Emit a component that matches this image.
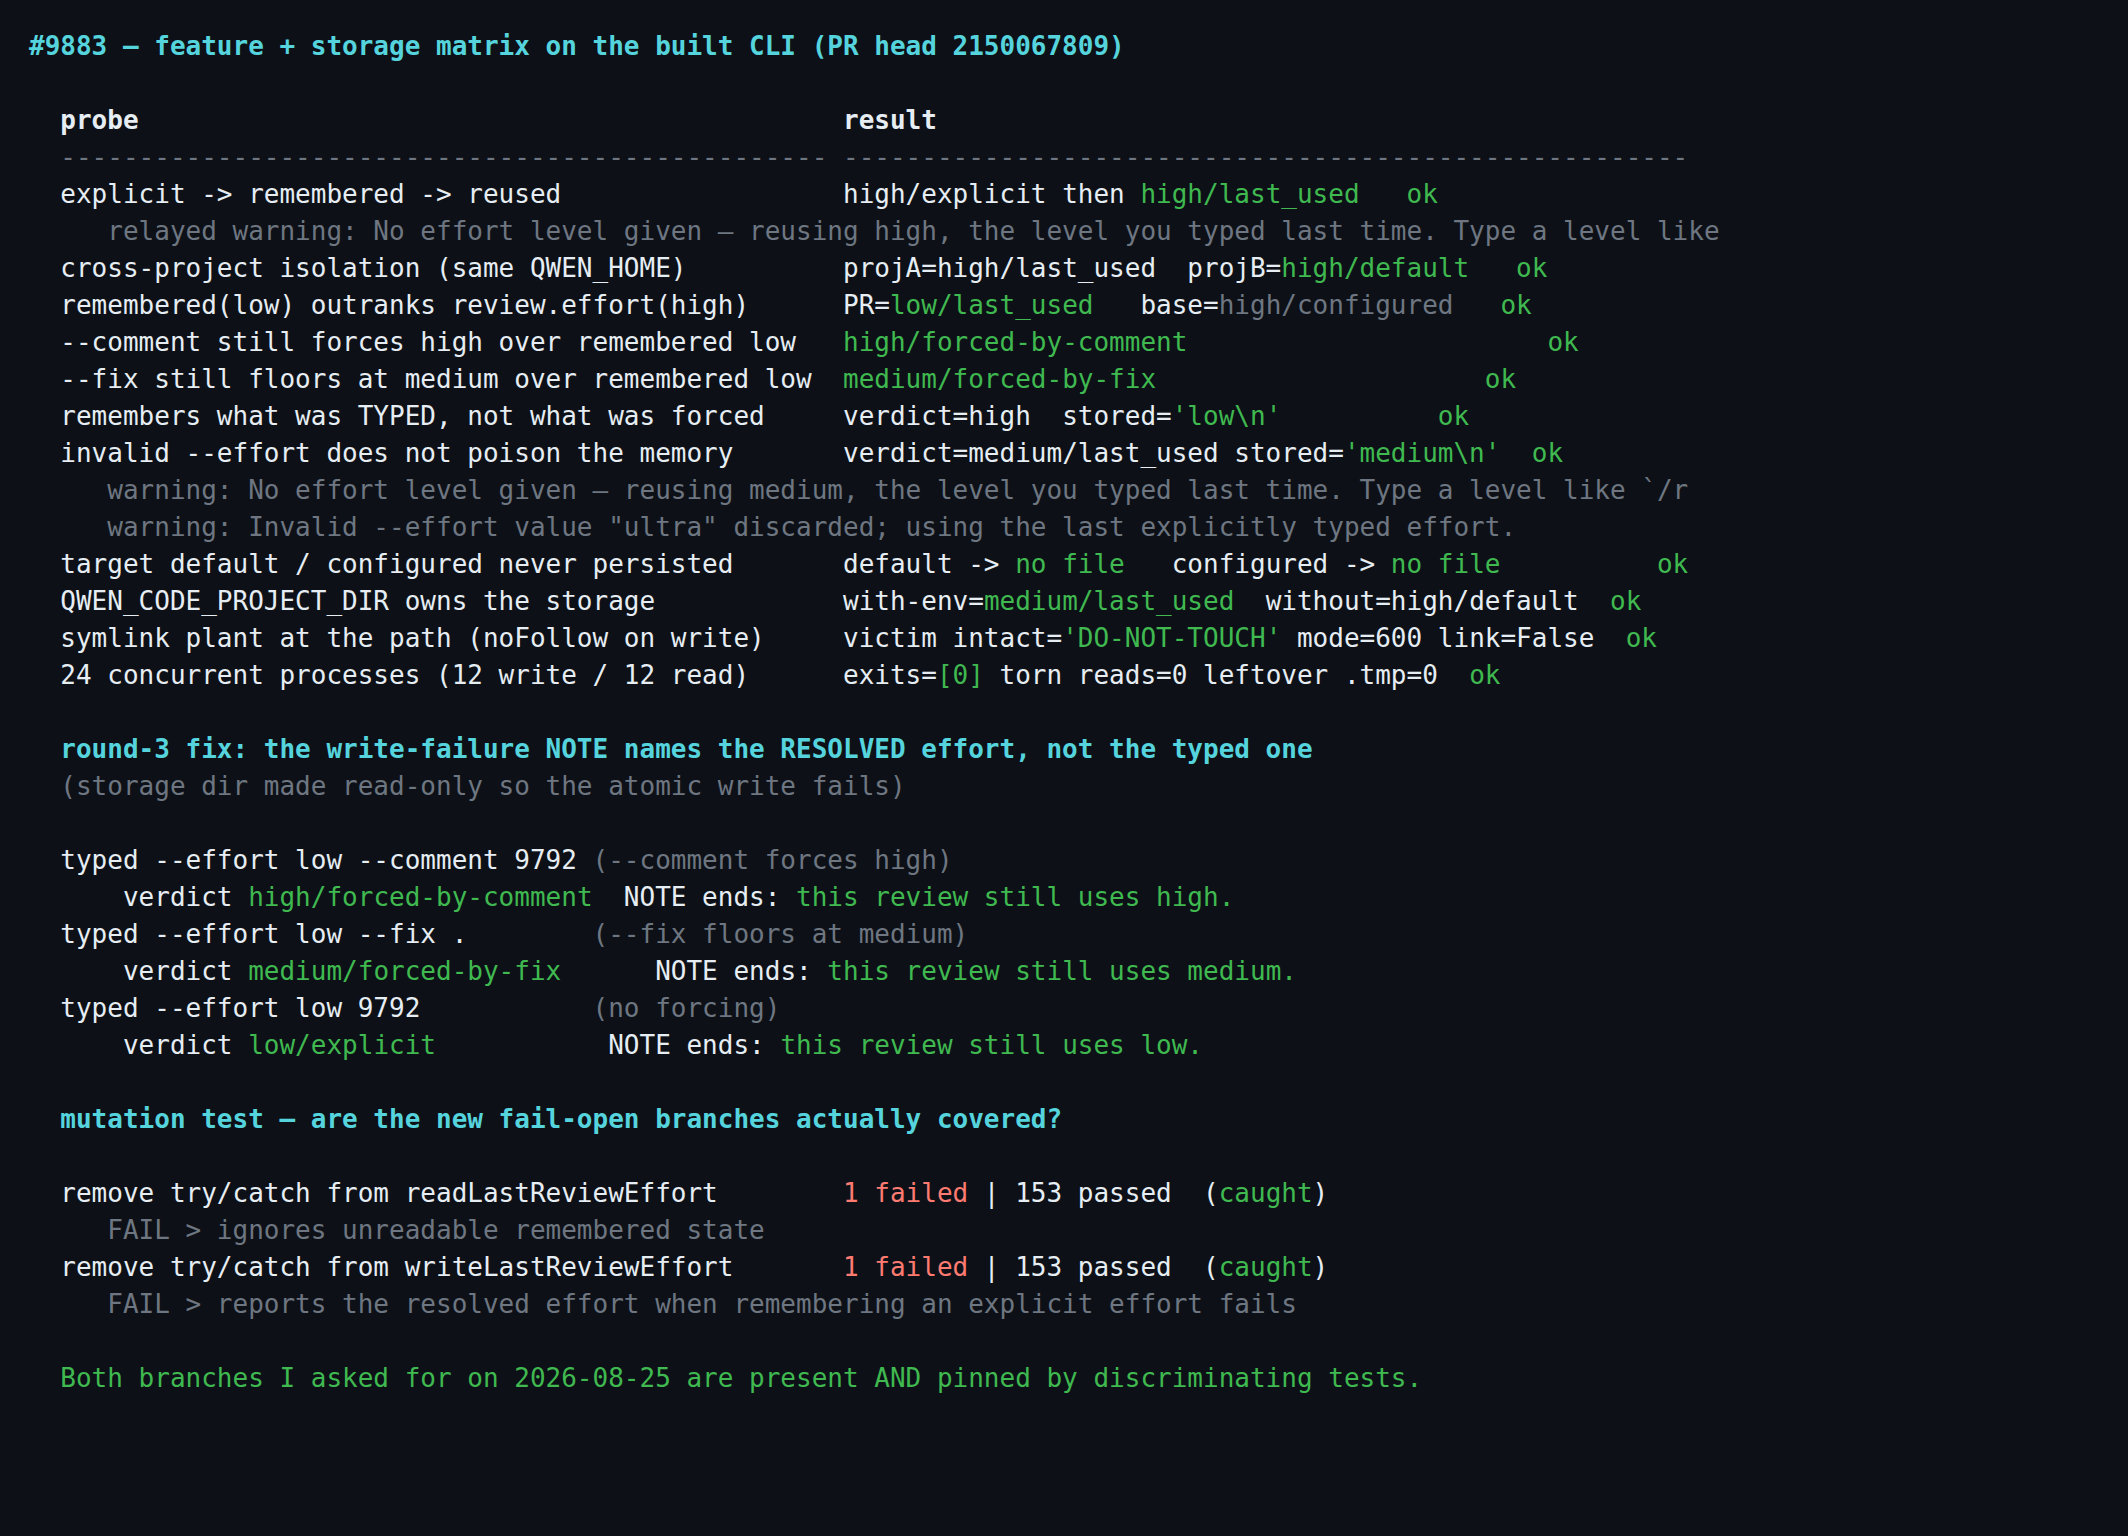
type Tone = "w" | "g" | "d" | "c" | "r";
type Seg = [string, Tone];
type Line = { segs: Seg[]; bold?: boolean };

const tone: Record<Tone, string> = {
  w: "text-[#e6edf3]",
  g: "text-[#3fb950]",
  d: "text-[#6e7681]",
  c: "text-[#56d4dd]",
  r: "text-[#ff7b72]",
};

const pad = (s: string, n: number) => s + " ".repeat(Math.max(0, n - s.length));

// probe column is 48 wide, then two spaces
const row = (probe: string, ...result: Seg[]): Line => ({
  segs: [[pad("  " + probe, 52), "w"], ...result],
});

const lines: Line[] = [
  { segs: [["#9883 — feature + storage matrix on the built CLI (PR head 2150067809)", "c"]], bold: true },
  { segs: [] },
  { segs: [[pad("  probe", 52) + "result", "w"]], bold: true },
  { segs: [["  " + "-".repeat(49) + " " + "-".repeat(54), "d"]] },
  row("explicit -> remembered -> reused", ["high/explicit then ", "w"], ["high/last_used   ok", "g"]),
  { segs: [["     relayed warning: No effort level given — reusing high, the level you typed last time. Type a level like", "d"]] },
  row("cross-project isolation (same QWEN_HOME)", ["projA=high/last_used  projB=", "w"], ["high/default   ok", "g"]),
  row(
    "remembered(low) outranks review.effort(high)",
    ["PR=", "w"],
    ["low/last_used", "g"],
    ["   base=", "w"],
    ["high/configured", "d"],
    ["   ok", "g"],
  ),
  row("--comment still forces high over remembered low", ["high/forced-by-comment" + " ".repeat(23) + "ok", "g"]),
  row("--fix still floors at medium over remembered low", ["medium/forced-by-fix" + " ".repeat(21) + "ok", "g"]),
  row("remembers what was TYPED, not what was forced", ["verdict=high  stored=", "w"], ["'low\\n'" + " ".repeat(10) + "ok", "g"]),
  row("invalid --effort does not poison the memory", ["verdict=medium/last_used stored=", "w"], ["'medium\\n'  ok", "g"]),
  { segs: [["     warning: No effort level given — reusing medium, the level you typed last time. Type a level like `/r", "d"]] },
  { segs: [['     warning: Invalid --effort value "ultra" discarded; using the last explicitly typed effort.', "d"]] },
  row(
    "target default / configured never persisted",
    ["default -> ", "w"],
    ["no file", "g"],
    ["   configured -> ", "w"],
    ["no file" + " ".repeat(10) + "ok", "g"],
  ),
  row("QWEN_CODE_PROJECT_DIR owns the storage", ["with-env=", "w"], ["medium/last_used", "g"], ["  without=high/default", "w"], ["  ok", "g"]),
  row("symlink plant at the path (noFollow on write)", ["victim intact=", "w"], ["'DO-NOT-TOUCH'", "g"], [" mode=600 link=False", "w"], ["  ok", "g"]),
  row("24 concurrent processes (12 write / 12 read)", ["exits=", "w"], ["[0]", "g"], [" torn reads=0 leftover .tmp=0", "w"], ["  ok", "g"]),
  { segs: [] },
  { segs: [["  round-3 fix: the write-failure NOTE names the RESOLVED effort, not the typed one", "c"]], bold: true },
  { segs: [["  (storage dir made read-only so the atomic write fails)", "d"]] },
  { segs: [] },
  { segs: [["  typed --effort low --comment 9792 ", "w"], ["(--comment forces high)", "d"]] },
  { segs: [["      verdict ", "w"], ["high/forced-by-comment", "g"], ["  NOTE ends: ", "w"], ["this review still uses high.", "g"]] },
  { segs: [["  typed --effort low --fix .        ", "w"], ["(--fix floors at medium)", "d"]] },
  { segs: [["      verdict ", "w"], ["medium/forced-by-fix", "g"], ["      NOTE ends: ", "w"], ["this review still uses medium.", "g"]] },
  { segs: [["  typed --effort low 9792           ", "w"], ["(no forcing)", "d"]] },
  { segs: [["      verdict ", "w"], ["low/explicit", "g"], ["           NOTE ends: ", "w"], ["this review still uses low.", "g"]] },
  { segs: [] },
  { segs: [["  mutation test — are the new fail-open branches actually covered?", "c"]], bold: true },
  { segs: [] },
  {
    segs: [
      ["  remove try/catch from readLastReviewEffort        ", "w"],
      ["1 failed", "r"],
      [" | 153 passed  (", "w"],
      ["caught", "g"],
      [")", "w"],
    ],
  },
  { segs: [["     FAIL > ignores unreadable remembered state", "d"]] },
  {
    segs: [
      ["  remove try/catch from writeLastReviewEffort       ", "w"],
      ["1 failed", "r"],
      [" | 153 passed  (", "w"],
      ["caught", "g"],
      [")", "w"],
    ],
  },
  { segs: [["     FAIL > reports the resolved effort when remembering an explicit effort fails", "d"]] },
  { segs: [] },
  { segs: [["  Both branches I asked for on 2026-08-25 are present AND pinned by discriminating tests.", "g"]] },
];

export default function App() {
  return (
    <div className="min-h-screen w-full bg-[#0d1117] pl-[29px] pt-[28px] font-['DejaVu_Sans_Mono',monospace] text-[26px]">
      {lines.map((line, i) => (
        <div key={i} className={`h-[37px] whitespace-pre leading-[37px] ${line.bold ? "font-bold" : ""}`}>
          {line.segs.map(([text, t], j) => (
            <span key={j} className={tone[t]}>
              {text}
            </span>
          ))}
        </div>
      ))}
    </div>
  );
}
